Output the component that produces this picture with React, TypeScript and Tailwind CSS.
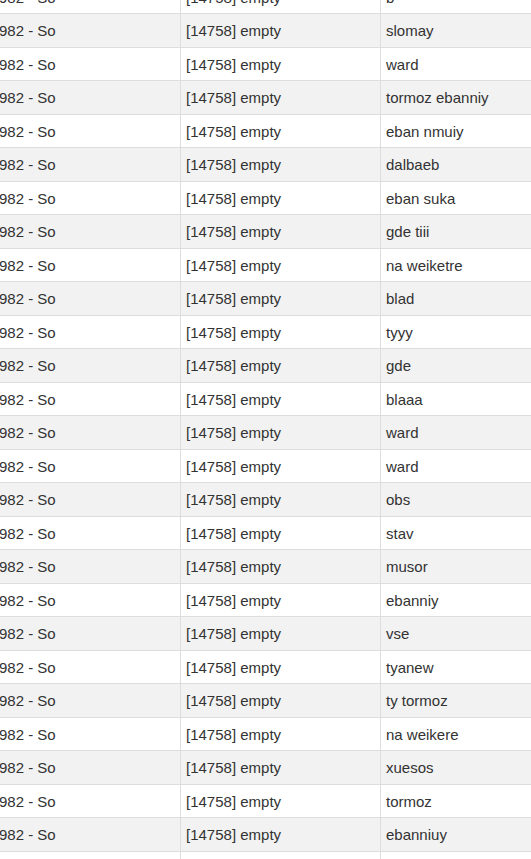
import React from "react";

const names = [
  "b",
  "slomay",
  "ward",
  "tormoz ebanniy",
  "eban nmuiy",
  "dalbaeb",
  "eban suka",
  "gde tiii",
  "na weiketre",
  "blad",
  "tyyy",
  "gde",
  "blaaa",
  "ward",
  "ward",
  "obs",
  "stav",
  "musor",
  "ebanniy",
  "vse",
  "tyanew",
  "ty tormoz",
  "na weikere",
  "xuesos",
  "tormoz",
  "ebanniuy",
  "",
];

const App: React.FC = () => {
  return (
    <div
      className="h-[859px] w-[531px] overflow-hidden bg-white text-[15px] text-[#333]"
      style={{ fontFamily: '"Liberation Sans", Arial, sans-serif' }}
    >
      {/* scrolled table: first row is cut off at the top */}
      <div className="-mt-[19.5px]">
        {names.map((name, i) => (
          <div
            key={i}
            className={
              "flex h-[33.5px] border-b border-[#dddddd] " +
              (i % 2 === 1 ? "bg-[#f2f2f2]" : "bg-white")
            }
          >
            <div className="flex w-[181px] shrink-0 items-center border-r border-[#dddddd] pt-[2px] whitespace-nowrap">
              <span className="-ml-[1px]">982 - So</span>
            </div>
            <div className="flex w-[200px] shrink-0 items-center border-r border-[#dddddd] pl-[5px] pt-[2px] whitespace-nowrap">
              [14758] empty
            </div>
            <div className="flex flex-1 items-center pl-[5px] pt-[2px] whitespace-nowrap">
              {name}
            </div>
          </div>
        ))}
      </div>
    </div>
  );
};

export default App;
